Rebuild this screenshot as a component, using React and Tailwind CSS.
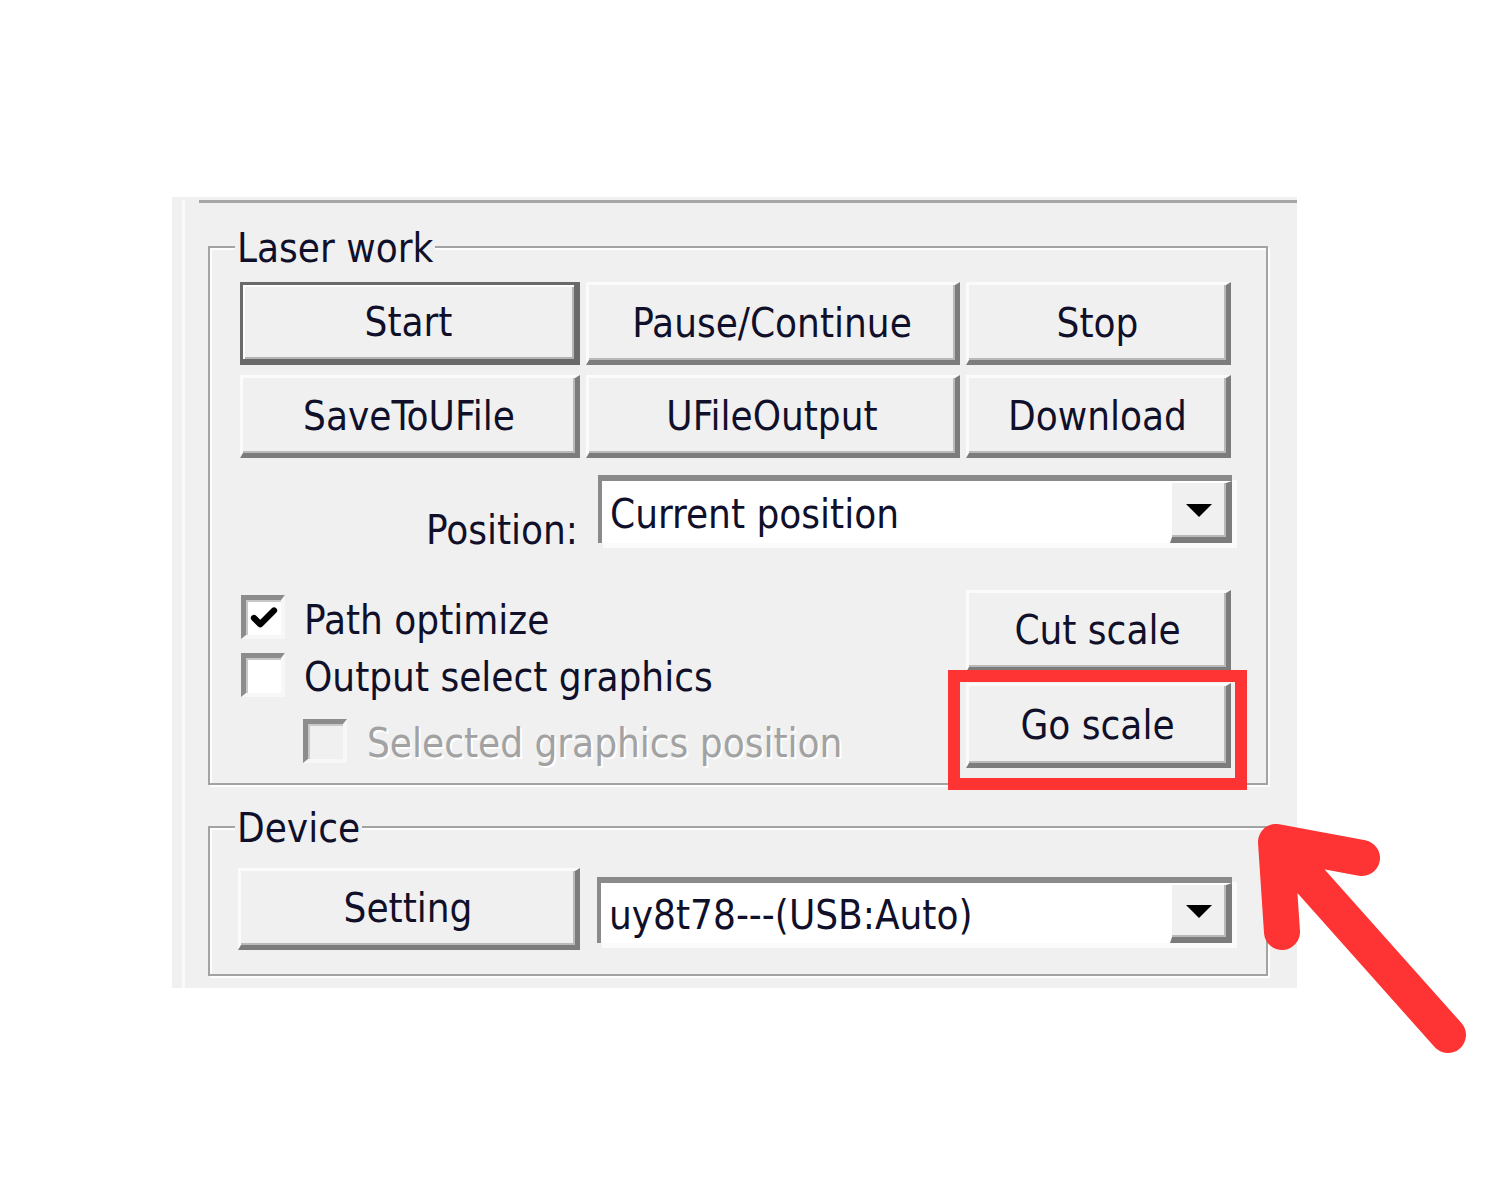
import { Check } from "lucide-react";

const FONT = "font-['DejaVu_Sans_Condensed','DejaVu_Sans',sans-serif]";

// classic raised push button
function Btn({ label, isDefault = false, className = "" }) {
  const edge = isDefault
    ? "border-[3px] border-r-[6px] border-b-[6px] border-[#6a6a6a] shadow-[inset_2px_2px_0_#fdfdfd,inset_-2px_-2px_0_#b4b4b4]"
    : "border-t-[3px] border-l-[3px] border-r-[5px] border-b-[5px] border-t-[#fbfbfb] border-l-[#fbfbfb] border-r-[#7c7c7c] border-b-[#7c7c7c] shadow-[inset_-2px_-2px_0_#b9b9b9]";
  return (
    <div className={`flex items-center justify-center bg-[#f0f0f0] text-[#10102a] ${edge} ${className}`}>
      <span className="leading-[40px]">{label}</span>
    </div>
  );
}

function Combo({ value, className = "" }) {
  return (
    <div className={`flex bg-white border-t-[6px] border-l-[4px] border-[#8a8a8a] shadow-[5px_5px_0_#fbfbfb] ${className}`}>
      <div className="flex-1 flex items-center pl-[8px] pt-[4px] text-[#10102a] leading-[40px]">{value}</div>
      <div className="w-[62px] flex items-center justify-center bg-[#f0f0f0] border-t-2 border-l-2 border-t-white border-l-white border-r-[6px] border-b-[6px] border-r-[#7c7c7c] border-b-[#7c7c7c] shadow-[inset_-2px_-2px_0_#b9b9b9]">
        <svg width="28" height="16" viewBox="0 0 28 16">
          <polygon points="1,2 27,2 14,15" fill="#000" />
        </svg>
      </div>
    </div>
  );
}

function CheckBox({ checked = false, disabled = false }) {
  return (
    <div
      className={`w-[44px] h-[44px] shrink-0 flex items-center justify-center border-t-[5px] border-l-[5px] border-r-[4px] border-b-[4px] border-t-[#8c8c8c] border-l-[#8c8c8c] border-r-[#f7f7f7] border-b-[#f7f7f7] shadow-[inset_2px_2px_0_#c8c8c8] ${
        disabled ? "bg-[#f0f0f0]" : "bg-white"
      }`}
    >
      {checked && <Check className="w-[30px] h-[30px] text-black" strokeWidth={5} />}
    </div>
  );
}

function GroupBox({ title, className = "", children }) {
  return (
    <div className={`relative w-[1060px] border-2 border-[#a3a3a3] shadow-[inset_2px_2px_0_#fdfdfd,2px_2px_0_#fdfdfd] ${className}`}>
      <span className="absolute left-[25px] -top-[20px] bg-[#f0f0f0] px-[2px] leading-[40px] text-[#10102a]">
        {title}
      </span>
      {children}
    </div>
  );
}

export default function App() {
  return (
    <div className={`relative w-[1512px] h-[1180px] bg-white pt-[197px] pl-[172px] text-[40px] ${FONT}`}>
      {/* dialog page */}
      <div className="w-[1125px] h-[791px] bg-[#f0f0f0] flex pt-[3px] pl-[10px]">
        <div className="flex-1 flex border-l-[3px] border-[#fafafa] pl-[14px]">
          <div className="flex-1 border-t-[3px] border-[#a6a6a6] pt-[43px] pl-[9px]">
            <GroupBox title="Laser work" className="pl-[30px] pt-[34px] pb-[15px]">
              <div className="grid grid-cols-[340px_374px_265px] gap-x-[6px] gap-y-[10px]">
                <Btn label="Start" isDefault className="h-[83px]" />
                <Btn label="Pause/Continue" className="h-[83px]" />
                <Btn label="Stop" className="h-[83px]" />
                <Btn label="SaveToUFile" className="h-[83px]" />
                <Btn label="UFileOutput" className="h-[83px]" />
                <Btn label="Download" className="h-[83px]" />
              </div>

              <div className="flex items-start h-[75px] mt-[17px]">
                <div className="w-[340px] text-right pr-[2px] mt-[35px] leading-[40px] text-[#10102a]">Position:</div>
                <Combo value="Current position" className="ml-[18px] w-[634px] h-[68px]" />
              </div>

              <div className="grid grid-cols-[714px_265px] gap-x-[12px] mt-[40px]">
                <div className="flex flex-col pt-[4px] pl-[1px] text-[#10102a]">
                  <div className="flex items-center gap-[19px]">
                    <CheckBox checked />
                    <span className="leading-[40px] mt-[6px]">Path optimize</span>
                  </div>
                  <div className="flex items-center gap-[19px] mt-[13px]">
                    <CheckBox />
                    <span className="leading-[40px] mt-[4px]">Output select graphics</span>
                  </div>
                  <div className="flex items-center gap-[20px] mt-[22px] ml-[62px]">
                    <CheckBox disabled />
                    <span className="leading-[40px] mt-[4px] text-[#a2a2a2] [text-shadow:2px_2px_0_#fff]">
                      Selected graphics position
                    </span>
                  </div>
                </div>

                <div className="flex flex-col gap-[11px]">
                  <Btn label="Cut scale" className="h-[82px]" />
                  <div className="relative">
                    <Btn label="Go scale" className="h-[85px]" />
                    {/* highlight annotation */}
                    <div className="absolute -left-[18px] -top-[13px] -right-[16px] -bottom-[22px] border-[12px] border-[#fe3434]" />
                  </div>
                </div>
              </div>
            </GroupBox>

            <GroupBox title="Device" className="mt-[41px] pl-[28px] pt-[40px] pb-[24px]">
              <div className="flex items-start">
                <Btn label="Setting" className="w-[342px] h-[82px]" />
                <Combo value="uy8t78---(USB:Auto)" className="ml-[17px] mt-[9px] w-[635px] h-[66px]" />
              </div>
            </GroupBox>
          </div>
        </div>
      </div>

      {/* arrow annotation */}
      <svg className="absolute inset-0 pointer-events-none" width="1512" height="1180" viewBox="0 0 1512 1180">
        <path
          d="M1448 1035 L1276 842 M1282 932 L1276 842 L1362 858"
          fill="none"
          stroke="#fe3434"
          strokeWidth="36"
          strokeLinecap="round"
          strokeLinejoin="round"
        />
      </svg>
    </div>
  );
}
